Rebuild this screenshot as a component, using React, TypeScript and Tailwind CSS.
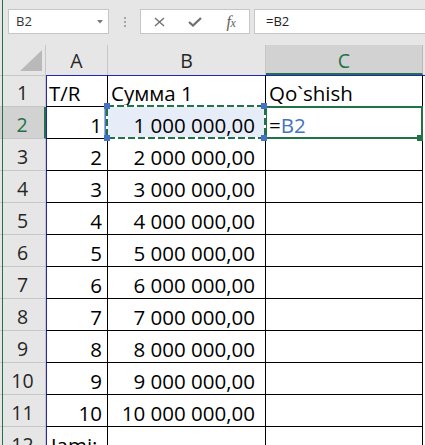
import React from "react";

const GREEN = "#217346";

const font = "font-['Open_Sans',sans-serif]";

const rows: { n: number; a: string; b: string; c: React.ReactNode }[] = [
  { n: 2, a: "1", b: "1 000 000,00", c: null },
  { n: 3, a: "2", b: "2 000 000,00", c: "" },
  { n: 4, a: "3", b: "3 000 000,00", c: "" },
  { n: 5, a: "4", b: "4 000 000,00", c: "" },
  { n: 6, a: "5", b: "5 000 000,00", c: "" },
  { n: 7, a: "6", b: "6 000 000,00", c: "" },
  { n: 8, a: "7", b: "7 000 000,00", c: "" },
  { n: 9, a: "8", b: "8 000 000,00", c: "" },
  { n: 10, a: "9", b: "9 000 000,00", c: "" },
  { n: 11, a: "10", b: "10 000 000,00", c: "" },
];

function B2Overlay() {
  return (
    <svg
      className="absolute -left-[4px] -top-[4px] z-20 overflow-visible"
      width="164"
      height="38"
      viewBox="0 0 164 38"
    >
      <line x1="1.2" y1="3" x2="1.2" y2="35" stroke="#4472c4" strokeWidth="1.5" />
      <rect x="3" y="3" width="158" height="32" fill="none" stroke="#ffffff" strokeWidth="2" />
      <rect
        x="3"
        y="3"
        width="158"
        height="32"
        fill="none"
        stroke={GREEN}
        strokeWidth="2"
        strokeDasharray="7 3"
      />
      <rect x="0" y="0" width="6" height="6" fill="#4472c4" />
      <rect x="0" y="32" width="6" height="6" fill="#4472c4" />
      <rect x="157" y="0" width="6" height="6" fill="#4472c4" />
      <rect x="157" y="32" width="6" height="6" fill="#4472c4" />
    </svg>
  );
}

export default function App() {
  const cellText = `${font} text-[20.5px] leading-[24px] text-black`;
  const rowHead = `h-[32px] bg-[#e6e6e6] border-r border-b border-[#c6c6c6] flex items-end justify-center pb-[1px] ${font} text-[19.5px] leading-[24px] text-[#262626]`;
  const aCell = `h-[32px] border-l border-l-[#2424c4] border-r border-b border-r-black border-b-black bg-white flex items-end justify-end pr-[5px] pb-[1px] ${cellText}`;
  const bCell = `h-[32px] border-r border-b border-black bg-white flex items-end justify-end pr-[10px] pb-[1px] ${cellText}`;
  const cCell = `h-[32px] border-r border-b border-black bg-white flex items-end pl-[3px] pb-[1px] ${cellText}`;

  return (
    <div className="relative w-[425px] h-[445px] overflow-hidden bg-white">
      {/* formula bar */}
      <div className="h-[45px] bg-[#e6e6e6] flex items-start pt-[9px]">
        <div className="ml-[8px] w-[101px] h-[25px] bg-white border border-[#c6c6c6] relative flex items-center pl-[7px]">
          <span className={`${font} text-[13px] text-[#333333]`}>B2</span>
          <svg className="absolute left-[88px] top-[10px]" width="6" height="4" viewBox="0 0 6 4">
            <path d="M0 0 L6 0 L3 3.5 Z" fill="#7a7a7a" />
          </svg>
        </div>
        <div className="ml-[15px] w-[2px] h-[25px] flex flex-col items-center justify-center gap-[2px]">
          <div className="w-[2px] h-[2px] bg-[#a6a6a6]" />
          <div className="w-[2px] h-[2px] bg-[#a6a6a6]" />
          <div className="w-[2px] h-[2px] bg-[#a6a6a6]" />
        </div>
        <div className="ml-[14px] w-[110px] h-[25px] bg-white border border-[#c6c6c6] flex">
          <div className="w-[36px] h-full flex items-center justify-center">
            <svg width="11" height="10" viewBox="0 0 11 10">
              <path d="M1 1 L10 9 M10 1 L1 9" stroke="#707070" strokeWidth="1.4" fill="none" />
            </svg>
          </div>
          <div className="w-[36px] h-full flex items-center justify-center">
            <svg width="14" height="10" viewBox="0 0 14 10">
              <path d="M1 5 L5 8.5 L13 1" stroke="#707070" strokeWidth="2.3" fill="none" />
            </svg>
          </div>
          <div className="w-[36px] h-full flex items-center justify-center">
            <span className="font-['Liberation_Serif',serif] italic text-[16px] leading-none text-[#5e5e5e] tracking-[-0.5px]">
              f<span className="text-[12px]">x</span>
            </span>
          </div>
        </div>
        <div className="ml-[4px] flex-1 h-[25px] bg-white border border-r-0 border-[#c6c6c6] flex items-center pl-[11px]">
          <span className={`${font} text-[13px] text-[#222222]`}>=B2</span>
        </div>
      </div>

      {/* grid */}
      <div className="grid grid-cols-[46px_62px_158px_157px_2px]">
        {/* column headers */}
        <div className="h-[30px] bg-[#e6e6e6] border-r border-[#c6c6c6] relative">
          <svg className="absolute left-[20px] top-[5px]" width="22" height="21" viewBox="0 0 22 21">
            <path d="M22 0 L22 21 L0 21 Z" fill="#b9b9b9" />
          </svg>
        </div>
        <div className={`h-[30px] bg-[#e6e6e6] border-r border-[#c6c6c6] flex items-end justify-center pb-[2px] ${font} text-[19.5px] leading-[24px] text-[#262626]`}>
          A
        </div>
        <div className={`h-[30px] bg-[#e6e6e6] border-r border-[#c6c6c6] flex items-end justify-center pb-[2px] ${font} text-[19.5px] leading-[24px] text-[#262626]`}>
          B
        </div>
        <div className={`h-[30px] bg-[#d2d2d2] border-r border-r-[#b8b8b8] border-b-2 border-b-[#217346] flex items-end justify-center ${font} text-[19.5px] leading-[24px] text-[#217346]`}>
          C
        </div>
        <div className="h-[30px] bg-[#e6e6e6]" />

        {/* row 1 */}
        <div className={`${rowHead} border-t`}>1</div>
        <div className={`h-[32px] border-t border-t-[#2424c4] border-l border-l-[#2424c4] border-r border-b border-r-black border-b-black bg-white flex items-end pl-[2px] pb-[1px] ${cellText}`}>
          T/R
        </div>
        <div className={`h-[32px] border-t border-t-[#2424c4] border-r border-b border-r-black border-b-black bg-white flex items-end pl-[3px] pb-[1px] ${cellText}`}>
          Сумма 1
        </div>
        <div className={`h-[32px] border-t border-t-[#2424c4] border-r border-b border-r-black border-b-black bg-white flex items-end pl-[3px] pb-[1px] ${cellText}`}>
          Qo`shish
        </div>
        <div className="h-[32px] border-t border-t-[#2424c4] bg-white" />

        {rows.map((r) => {
          const selected = r.n === 2;
          return (
            <React.Fragment key={r.n}>
              {selected ? (
                <div className={`h-[32px] bg-[#d2d2d2] border-r-2 border-r-[#217346] border-b border-b-[#c6c6c6] flex items-end justify-center pb-[1px] ${font} text-[19.5px] leading-[24px] text-[#217346]`}>
                  {r.n}
                </div>
              ) : (
                <div className={rowHead}>{r.n}</div>
              )}
              <div className={aCell}>{r.a}</div>
              {selected ? (
                <div className={`h-[32px] border-r border-b border-black bg-[#e6edf8] relative flex items-end justify-end pr-[10px] pb-[1px] ${cellText}`}>
                  {r.b}
                  <B2Overlay />
                </div>
              ) : (
                <div className={bCell}>{r.b}</div>
              )}
              {selected ? (
                <div className={`${cCell} relative`}>
                  <span>
                    =<span className="text-[#4472c4]">B2</span>
                  </span>
                  <div className="absolute -left-[1px] -top-[1px] -right-[1px] -bottom-[1px] border-2 border-[#217346] z-10" />
                  <div className="absolute -right-[1px] -bottom-[3px] w-[6px] h-[6px] bg-[#217346] z-10" />
                </div>
              ) : (
                <div className={cCell}>{r.c}</div>
              )}
              <div className="h-[32px] bg-white" />
            </React.Fragment>
          );
        })}

        {/* row 12 */}
        <div className={rowHead}>12</div>
        <div className={`h-[32px] border-l border-l-[#2424c4] border-r border-b border-r-black border-b-black bg-white flex items-end pl-[4px] pb-[1px] ${cellText}`}>
          Jami:
        </div>
        <div className={bCell} />
        <div className={cCell} />
        <div className="h-[32px] bg-white" />
      </div>

      {/* window left edge */}
      <div className="absolute left-[2px] top-0 bottom-0 w-[1px] bg-[#217346]" />
    </div>
  );
}
